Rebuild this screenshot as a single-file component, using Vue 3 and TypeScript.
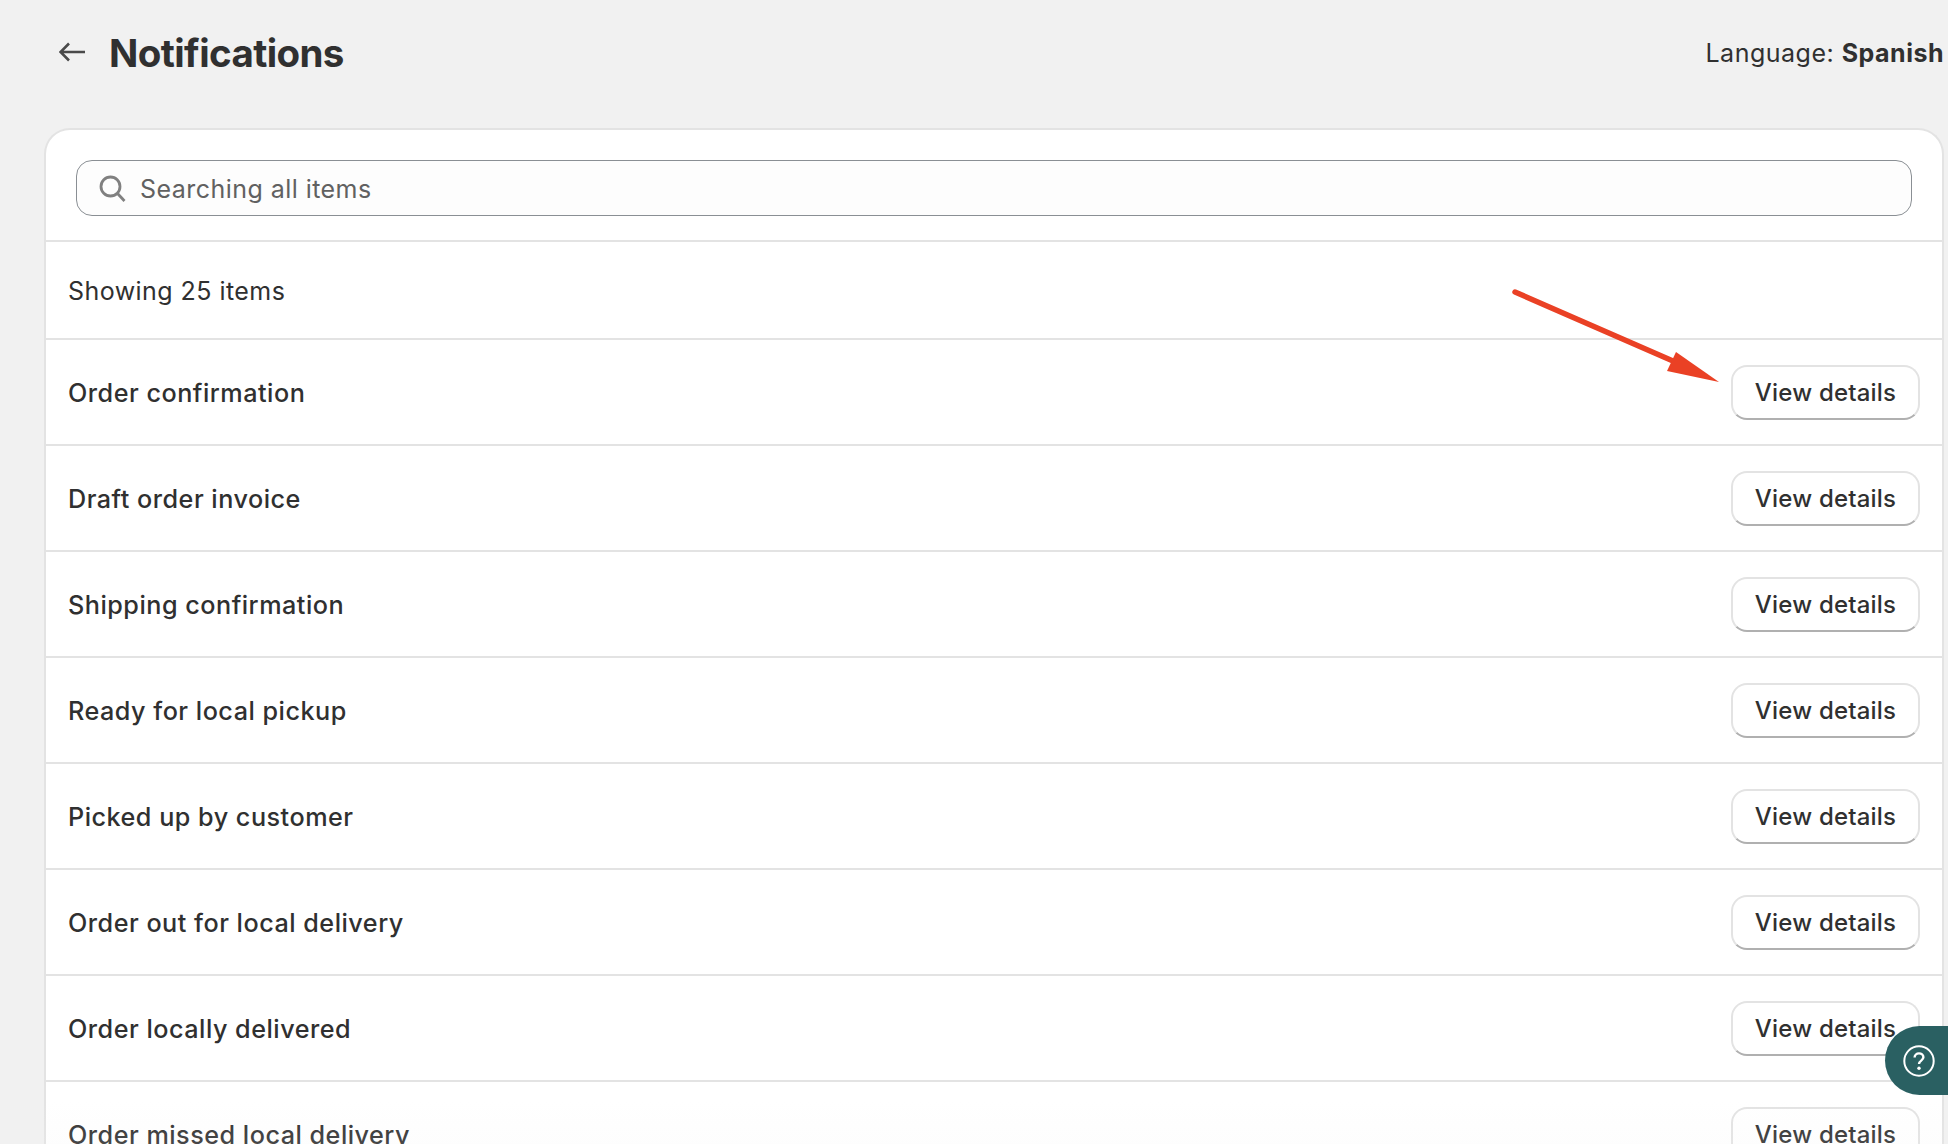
<script setup lang="ts">
const items: string[] = [
  'Order confirmation',
  'Draft order invoice',
  'Shipping confirmation',
  'Ready for local pickup',
  'Picked up by customer',
  'Order out for local delivery',
  'Order locally delivered',
  'Order missed local delivery',
]
</script>

<template>
  <div class="page">
    <header class="topbar">
      <div class="title-group">
        <svg class="back" width="26" height="20" viewBox="0 0 26 20" fill="none">
          <path d="M10 1.500 1.500 10l8.500 8.500M2 10h24" stroke="#4a4a4a" stroke-width="2.600" />
        </svg>
        <h1>Notifications</h1>
      </div>
      <div class="language">Language: <strong>Spanish</strong></div>
    </header>

    <section class="card">
      <div class="search-row">
        <div class="search">
          <svg width="27" height="27" viewBox="0 0 27 27" fill="none">
            <circle cx="11.500" cy="11.500" r="9.500" stroke="#808080" stroke-width="2.800" />
            <path d="m18.500 18.500 7 7.500" stroke="#808080" stroke-width="2.800" />
          </svg>
          <span>Searching all items</span>
        </div>
      </div>
      <div class="count-row"><span>Showing 25 items</span></div>
      <div v-for="item in items" :key="item" class="row">
        <span class="row-name">{{ item }}</span>
        <button class="details" type="button">View details</button>
      </div>

      <svg class="annotation" width="216" height="104" viewBox="0 0 216 104" fill="none">
        <path d="M4 5 162 74" stroke="#ea4125" stroke-width="5.500" stroke-linecap="round" />
        <path d="M165 65 208 95 156 84Z" fill="#ea4125" />
      </svg>
    </section>

    <div class="fade"></div>

    <button class="help" type="button" aria-label="Help">
      <svg width="34" height="34" viewBox="0 0 34 34" fill="none">
        <circle cx="17" cy="17" r="14.700" stroke="#fff" stroke-width="2" />
        <path d="M12.600 13.600c0-2.600 2-4.200 4.400-4.200s4.400 1.600 4.400 3.900c0 3.300-4.400 3.300-4.400 6.700" stroke="#fff" stroke-width="2.400" />
        <circle cx="17" cy="24.300" r="1.700" fill="#fff" />
      </svg>
    </button>
  </div>
</template>

<style>
html,
body {
  margin: 0;
  overflow: hidden;
}
</style>

<style scoped>
.page {
  position: relative;
  box-sizing: border-box;
  height: 1144px;
  overflow: hidden;
  padding: 0 4px 0 44px;
  background: #f1f1f1;
  color: #303030;
  font-family: Inter, "Liberation Sans", sans-serif;
}

.topbar {
  display: flex;
  align-items: center;
  justify-content: space-between;
  height: 104px;
  margin-bottom: 24px;
  padding-top: 2px;
  box-sizing: border-box;
}

.title-group {
  display: flex;
  align-items: center;
  gap: 24px;
  padding-left: 15px;
}

.back {
  margin-top: -2px;
}

h1 {
  margin: 0;
  font-size: 38.500px;
  font-weight: 650;
  letter-spacing: -0.600px;
  line-height: 1;
}

.language {
  font-size: 25px;
  letter-spacing: 0.500px;
}

.language strong {
  font-weight: 650;
}

.card {
  position: relative;
  box-sizing: border-box;
  border: solid #e3e3e3;
  border-width: 2px 2px 0;
  border-radius: 26px 26px 0 0;
  background: #fff;
}

.search-row {
  padding: 30px 30px 24px 30px;
  border-bottom: 2px solid #e3e3e3;
}

.search {
  display: flex;
  align-items: center;
  gap: 14px;
  box-sizing: border-box;
  height: 56px;
  padding: 2px 0 0 22px;
  border: 1px solid #8a8f94;
  border-radius: 16px;
  background: #fdfdfd;
  color: #616161;
  font-size: 25px;
  letter-spacing: 0.450px;
}

.search svg {
  margin-top: -2px;
}

.count-row {
  display: flex;
  align-items: center;
  box-sizing: border-box;
  height: 98px;
  padding: 2px 0 0 22px;
  border-bottom: 2px solid #e3e3e3;
  font-size: 25px;
  letter-spacing: 0.450px;
}

.row {
  display: flex;
  align-items: center;
  justify-content: space-between;
  box-sizing: border-box;
  height: 106px;
  padding: 0 22px;
  border-bottom: 2px solid #e3e3e3;
}

.row-name {
  padding-top: 1px;
  font-size: 25.200px;
  font-weight: 500;
  letter-spacing: 0.500px;
}

.details {
  box-sizing: border-box;
  width: 189px;
  height: 55px;
  padding: 1px 0 0;
  border: 2px solid #e3e3e3;
  border-bottom-color: #b0b0b0;
  border-radius: 16px;
  background: #fff;
  color: #303030;
  font-family: inherit;
  font-size: 24px;
  font-weight: 500;
  letter-spacing: 0.200px;
}

.annotation {
  position: absolute;
  top: 157px;
  left: 1465px;
}

.fade {
  position: absolute;
  right: 0;
  bottom: 0;
  left: 0;
  height: 44px;
  background: linear-gradient(rgba(241, 241, 241, 0), rgba(241, 241, 241, 0.12));
  pointer-events: none;
}

.help {
  position: absolute;
  top: 1026px;
  right: 0;
  display: flex;
  align-items: center;
  justify-content: center;
  width: 63px;
  height: 69px;
  padding: 0 0 0 4px;
  border: 0;
  border-radius: 35px 0 0 35px;
  background: #2a6062;
}
</style>
